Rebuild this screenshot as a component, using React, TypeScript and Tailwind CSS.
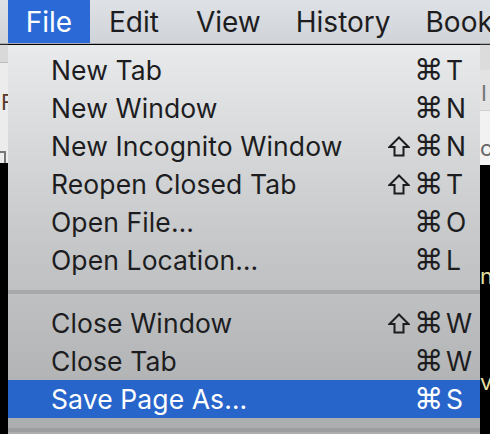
import React from "react";

type Item = { label: string; shift?: boolean; keyName: string; active?: boolean };

const topItems: Item[] = [
  { label: "New Tab", keyName: "T" },
  { label: "New Window", keyName: "N" },
  { label: "New Incognito Window", shift: true, keyName: "N" },
  { label: "Reopen Closed Tab", shift: true, keyName: "T" },
  { label: "Open File…", keyName: "O" },
  { label: "Open Location…", keyName: "L" },
];

const bottomItems: Item[] = [
  { label: "Close Window", shift: true, keyName: "W" },
  { label: "Close Tab", keyName: "W" },
  { label: "Save Page As…", keyName: "S", active: true },
];

const FONT = { fontFamily: "Inter, 'Noto Sans', 'DejaVu Sans', sans-serif" };
const SYM = { fontFamily: "'DejaVu Sans', sans-serif" };

function ShiftGlyph({ color }: { color: string }) {
  return (
    <svg width="22" height="21" viewBox="0 0 22 21" fill="none">
      <path
        d="M11 1.5 L20.5 11 H15.5 V19.5 H6.5 V11 H1.5 Z"
        stroke={color}
        strokeWidth="2"
        strokeLinejoin="miter"
      />
    </svg>
  );
}

function Row({ item }: { item: Item }) {
  const text = item.active ? "text-white" : "text-[#1d1d1f]";
  return (
    <div
      className={`flex h-[38px] items-center pl-[43px] ${item.active ? "bg-[#2865cb]" : ""} ${text}`}
    >
      <span className="flex-1 text-[26.5px] leading-none tracking-[0.1px]">{item.label}</span>
      <div className="flex w-[64px] shrink-0 items-center justify-end gap-[4px]">
        {item.shift && <ShiftGlyph color={item.active ? "#ffffff" : "#1d1d1f"} />}
        <span className="text-[29px] leading-none" style={SYM}>
          ⌘
        </span>
      </div>
      <span className="w-[37px] shrink-0 pl-[3px] text-[26.5px] leading-none">{item.keyName}</span>
    </div>
  );
}

export default function App() {
  return (
    <div className="relative h-[434px] w-[490px] overflow-hidden bg-black" style={FONT}>
      {/* menu bar */}
      <div className="flex h-[44px] items-stretch overflow-hidden whitespace-nowrap border-b border-[#a9acb0] bg-gradient-to-b from-[#dee1e5] to-[#d0d3d7] text-[28px] leading-none text-[#1d1d1f]">
        <div className="ml-[8px] flex w-[82px] shrink-0 items-center justify-center bg-[#2b6ad6] text-white">
          File
        </div>
        <div className="flex shrink-0 items-center pl-[19px]">Edit</div>
        <div className="flex shrink-0 items-center pl-[37px]">View</div>
        <div className="flex shrink-0 items-center pl-[35px]">History</div>
        <div className="flex shrink-0 items-center pl-[35px]">Bookmarks</div>
      </div>

      {/* windows behind the menu */}
      <div className="flex h-[390px] justify-between">
        <div className="flex w-[8px] flex-col">
          <div className="h-[18px] border-t border-[#2a2a2a] bg-[#d9d9d9]" />
          <div className="relative h-[101px] overflow-hidden border-t border-[#bdbdbd] bg-[#ececec] text-[22px] leading-none text-[#5a3a2a]">
            <span className="absolute left-[1px] top-[28px]">F</span>
            <div className="absolute left-[-6px] top-[88px] h-[16px] w-[12px] border-2 border-[#777]" />
          </div>
          <div className="flex-1 bg-black" />
        </div>
        <div className="flex w-[10px] flex-col overflow-hidden">
          <div className="h-[26px] border-t border-[#2a2a2a] bg-[#dcdcdc]" />
          <div className="relative h-[40px] bg-[#e3e3e3] text-[22px] leading-none text-[#777]">
            <span className="absolute left-[1px] top-[12px]">I</span>
          </div>
          <div className="relative h-[55px] border-t border-[#cfcfcf] bg-[#f2f2f2] text-[22px] leading-none text-[#666]">
            <span className="absolute left-[0px] top-[26px]">c</span>
          </div>
          <div className="relative flex-1 bg-black text-[22px] leading-none text-[#e8e0a0]">
            <span className="absolute left-[0px] top-[100px]">n</span>
            <span className="absolute left-[0px] top-[206px]">v</span>
          </div>
        </div>
      </div>

      {/* File menu */}
      <div className="absolute left-[8px] top-[45px] h-[400px] w-[472px] bg-gradient-to-b from-[#e8eaec] via-[#c5c7c9] to-[#a9abad] pt-[6px]">
        {topItems.map((it) => (
          <Row key={it.label} item={it} />
        ))}
        <div className="flex h-[25px] items-center">
          <div className="h-[4px] w-full bg-[#a6a8aa]" />
        </div>
        {bottomItems.map((it) => (
          <Row key={it.label} item={it} />
        ))}
        <div className="h-[10px]" />
        <div className="h-[4px] w-full bg-[#9c9ea0]" />
      </div>
    </div>
  );
}
